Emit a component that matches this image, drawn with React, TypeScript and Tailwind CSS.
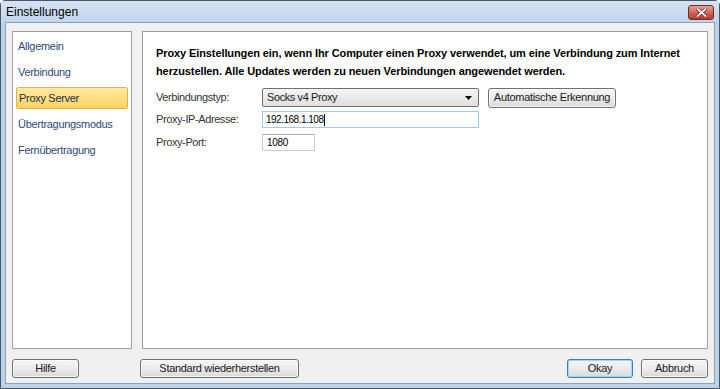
const font = { fontFamily: '"Liberation Sans", Arial, sans-serif' };

const navItems = ['Allgemein', 'Verbindung', 'Proxy Server', 'Übertragungsmodus', 'Fernübertragung'];

function Btn({ label, className = '', primary = false }: { label: string; className?: string; primary?: boolean }) {
  return (
    <button
      className={`h-[19px] rounded-[3px] border text-[11px] tracking-[-0.3px] whitespace-nowrap text-[#1a1a1a] bg-gradient-to-b from-[#f6f6f6] via-[#ebebeb] to-[#d9d9d9] ${
        primary ? 'border-[#3c7fb1] shadow-[inset_0_0_0_1px_#a7d6f5]' : 'border-[#707070] shadow-[inset_0_0_0_1px_rgba(255,255,255,0.7)]'
      } ${className}`}
    >
      {label}
    </button>
  );
}

export default function App() {
  return (
    <div style={font} className="w-[720px] h-[389px] overflow-hidden">
      <div className="w-full h-full flex flex-col border border-[#4a5566] bg-[#bcd1ea] rounded-t-[5px]">
        {/* title bar */}
        <div className="h-[21px] flex items-center justify-between pl-[5px] pr-[5px] bg-gradient-to-b from-[#d6e3f3] to-[#c1d5ec]">
          <span className="text-[12px] text-black">Einstellungen</span>
          <div className="w-[26px] h-[15px] mt-[2px] rounded-[3px] border border-[#6d2b24] bg-gradient-to-b from-[#e6a195] via-[#d0685a] to-[#b8382b] flex items-center justify-center">
            <svg width="11" height="9" viewBox="0 0 11 9">
              <path d="M1.5 1 L9.5 8 M9.5 1 L1.5 8" stroke="#5a1a14" strokeWidth="3" strokeLinecap="square" />
              <path d="M1.5 1 L9.5 8 M9.5 1 L1.5 8" stroke="#ffffff" strokeWidth="1.8" strokeLinecap="square" />
            </svg>
          </div>
        </div>
        {/* body */}
        <div className="flex-1 mx-[4px] mb-[4px] border border-[#8da2bd] bg-[#f0f0f0] flex flex-col px-[6px] pt-[8px]">
          <div className="flex gap-[10px] h-[318px]">
            <div className="w-[120px] h-full bg-white border border-[#a0a0a0] flex flex-col gap-[4px] pt-[3px] px-[3px]">
              {navItems.map((item) => (
                <div
                  key={item}
                  className={`h-[22px] flex items-center pl-[2px] text-[11px] tracking-[-0.3px] ${
                    item === 'Proxy Server'
                      ? 'rounded-[2px] border border-[#e0b34a] bg-gradient-to-b from-[#ffe8a0] to-[#fcd45e] text-[#1f2d45] pl-[1px]'
                      : 'text-[#2c4a78]'
                  }`}
                >
                  {item}
                </div>
              ))}
            </div>
            <div className="flex-1 h-full bg-white border border-[#a0a0a0] pl-[13px] pt-[12px]">
              <div className="text-[11px] tracking-[-0.1px] font-bold text-black leading-[18px] whitespace-nowrap">
                <div>Proxy Einstellungen ein, wenn Ihr Computer einen Proxy verwendet, um eine Verbindung zum Internet</div>
                <div>herzustellen. Alle Updates werden zu neuen Verbindungen angewendet werden.</div>
              </div>
              <div className="mt-[8px] flex flex-col gap-[4px] text-[11px] tracking-[-0.4px] text-[#333]">
                <div className="flex items-center h-[19px]">
                  <span className="w-[106px]">Verbindungstyp:</span>
                  <div className="w-[217px] h-[19px] rounded-[2px] border border-[#707070] bg-gradient-to-b from-[#f4f4f4] to-[#e0e0e0] flex items-center justify-between pl-[4px] pr-[6px] text-[#1a1a1a]">
                    <span>Socks v4 Proxy</span>
                    <svg width="7" height="4" viewBox="0 0 7 4">
                      <path d="M0 0 H7 L3.5 4 Z" fill="#000" />
                    </svg>
                  </div>
                  <Btn label="Automatische Erkennung" className="ml-[9px] w-[128px] h-[20px]" />
                </div>
                <div className="flex items-center h-[17px]">
                  <span className="w-[106px]">Proxy-IP-Adresse:</span>
                  <div className="w-[217px] h-[17px] border border-[#a6c8ea] bg-white flex items-center pl-[3px] text-[10px] tracking-[-0.5px] text-black">
                    192.168.1.108<span className="inline-block w-px h-[12px] bg-black ml-[1px]" />
                  </div>
                </div>
                <div className="flex items-center h-[17px] mt-[2px]">
                  <span className="w-[106px]">Proxy-Port:</span>
                  <div className="w-[53px] h-[17px] border border-[#c9cdd4] border-t-[#abadb3] bg-white flex items-center pl-[4px] text-[10px] tracking-[-0.3px] text-black">
                    1080
                  </div>
                </div>
              </div>
            </div>
          </div>
          <div className="flex items-center mt-[10px]">
            <Btn label="Hilfe" className="w-[67px]" />
            <Btn label="Standard wiederherstellen" className="ml-[61px] w-[159px]" />
            <div className="flex-1" />
            <Btn label="Okay" primary className="w-[66px]" />
            <Btn label="Abbruch" className="ml-[8px] w-[67px]" />
          </div>
        </div>
      </div>
    </div>
  );
}
